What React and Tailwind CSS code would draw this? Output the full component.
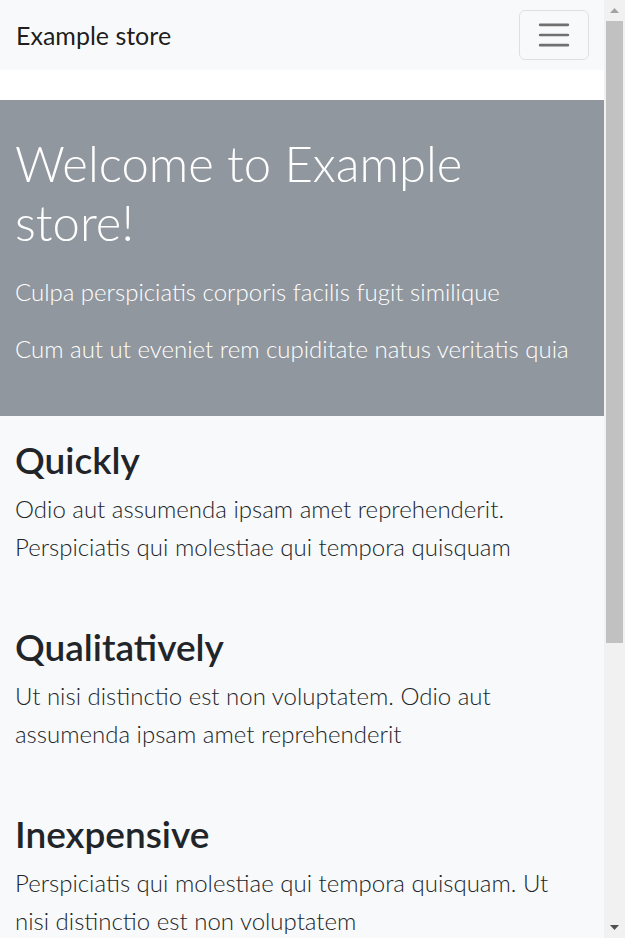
const features = [
  {
    title: "Quickly",
    text: "Odio aut assumenda ipsam amet reprehenderit. Perspiciatis qui molestiae qui tempora quisquam",
  },
  {
    title: "Qualitatively",
    text: "Ut nisi distinctio est non voluptatem. Odio aut assumenda ipsam amet reprehenderit",
  },
  {
    title: "Inexpensive",
    text: "Perspiciatis qui molestiae qui tempora quisquam. Ut nisi distinctio est non voluptatem",
  },
];

function Navbar() {
  return (
    <nav className="h-[70px] shrink-0 bg-[#f8f9fa] flex items-center justify-between pl-[16px] pr-[15px]">
      <a className="text-[25px] leading-[38px] text-[rgba(0,0,0,0.9)]">Example store</a>
      <button className="w-[70px] h-[50px] rounded-[6px] border border-[rgba(0,0,0,0.1)] flex items-center justify-center">
        <svg width="38" height="38" viewBox="0 0 30 30">
          <path
            d="M4 7h22M4 15h22M4 23h22"
            stroke="rgba(0,0,0,0.55)"
            strokeWidth="2"
            strokeLinecap="round"
            strokeMiterlimit="10"
          />
        </svg>
      </button>
    </nav>
  );
}

function Scrollbar() {
  return (
    <div className="w-[21px] h-full bg-[#f1f1f1] flex flex-col items-center">
      <div className="h-[21px] flex items-center justify-center">
        <svg width="9" height="5" viewBox="0 0 9 5">
          <path d="M0 5L4.5 0L9 5Z" fill="#a3a3a3" />
        </svg>
      </div>
      <div className="w-[17px] h-[622px] bg-[#c1c1c1]" />
      <div className="flex-1" />
      <div className="h-[21px] flex items-center justify-center">
        <svg width="9" height="5" viewBox="0 0 9 5">
          <path d="M0 0L4.5 5L9 0Z" fill="#505050" />
        </svg>
      </div>
    </div>
  );
}

export default function App() {
  return (
    <div className="h-[938px] w-[625px] overflow-hidden flex bg-white font-['Lato',sans-serif] text-[#212529]">
      <div className="w-[604px] h-full flex flex-col">
        <Navbar />
        <section className="mt-[30px] h-[316px] shrink-0 bg-[#91979e] px-[15px] pt-[34px] text-white">
          <h1 className="text-[49px] leading-[59px] font-light mb-[23px]">Welcome to Example store!</h1>
          <p className="text-[24px] leading-[34px] font-light mb-[23px]">
            Culpa perspiciatis corporis facilis fugit similique
          </p>
          <p className="text-[24px] leading-[34px] font-light">
            Cum aut ut eveniet rem cupiditate natus veritatis quia
          </p>
        </section>
        <section className="flex-1 shrink-0 bg-[#f8f9fa] px-[15px] pt-[22px] flex flex-col gap-[59px]">
          {features.map((f) => (
            <div key={f.title}>
              <h2 className="text-[37px] leading-[44px] font-semibold mb-[8px]">{f.title}</h2>
              <p className="max-w-[560px] text-[24px] leading-[38px] font-light">{f.text}</p>
            </div>
          ))}
        </section>
      </div>
      <Scrollbar />
    </div>
  );
}
